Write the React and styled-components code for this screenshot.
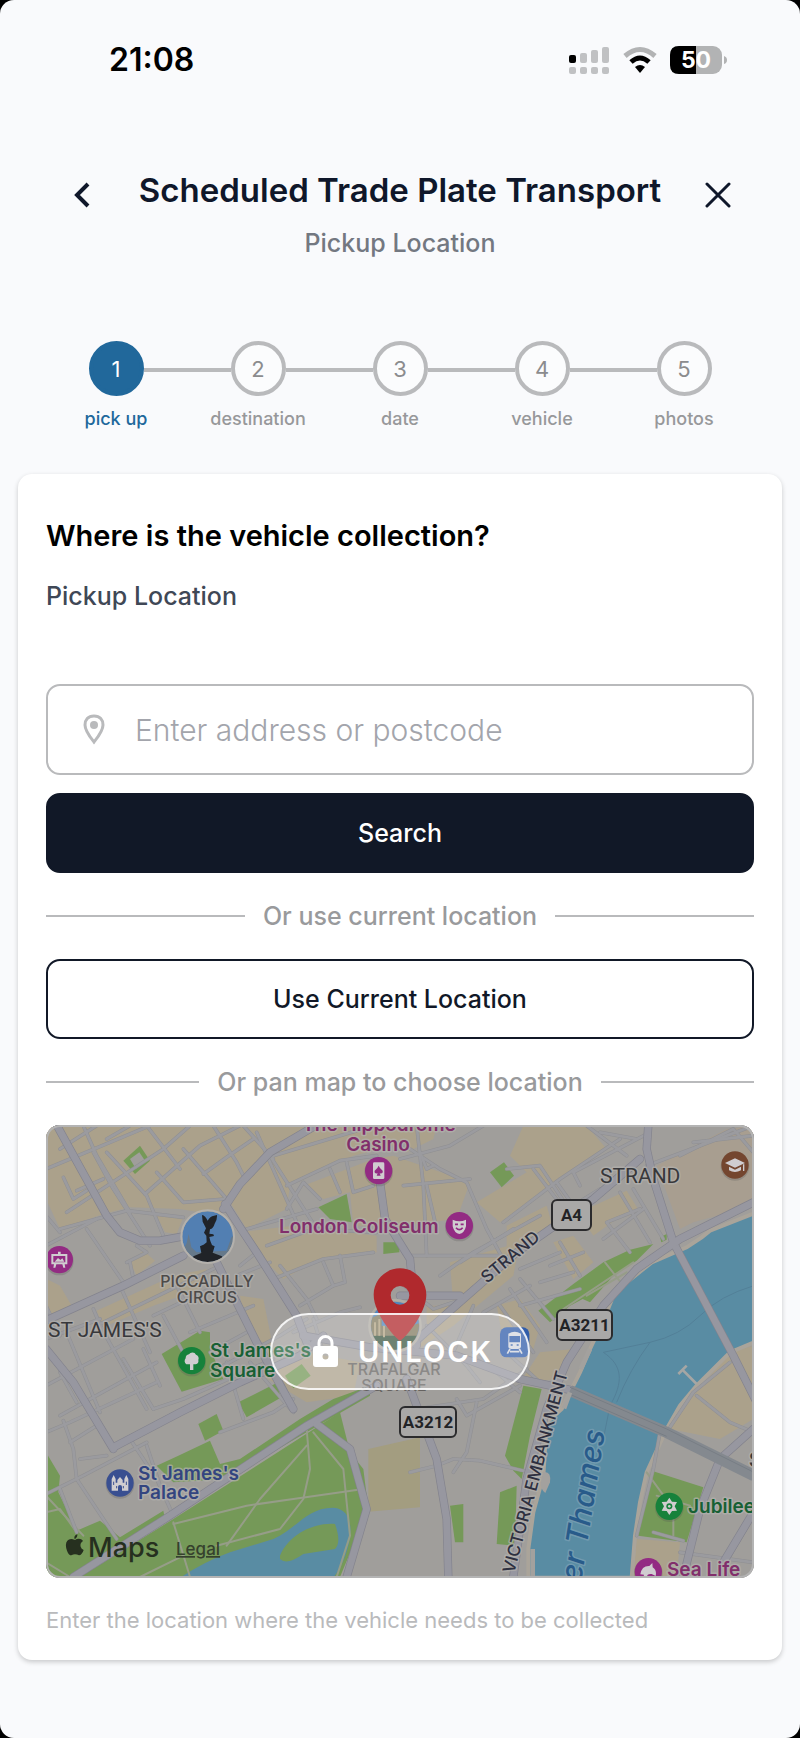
import React from "react";
import styled, { createGlobalStyle, css } from "styled-components";

const GlobalStyle = createGlobalStyle`
  * { box-sizing: border-box; }
  body { margin: 0; background: #000; }
  button, input { font: inherit; }
`;

const font = `Inter, "Liberation Sans", sans-serif`;

const Screen = styled.div`
  min-height: 100vh;
  background: #f9fafc;
  border-radius: 14px;
  font-family: ${font};
  color: #111827;
  padding-bottom: 76px;
`;

const StatusBar = styled.header`
  display: flex;
  align-items: center;
  justify-content: space-between;
  padding: 40px 72px 0 109px;
  height: 80px;
`;

const Clock = styled.time`
  font-size: 32px;
  line-height: 40px;
  font-weight: 600;
  color: #000;
`;

const StatusIcons = styled.div`
  display: flex;
  align-items: center;
  gap: 13px;
`;

const TitleBar = styled.div`
  display: grid;
  grid-template-columns: 72px 1fr 72px;
  align-items: start;
  padding: 88px 46px 0;
`;

const Titles = styled.div`
  text-align: center;
  white-space: nowrap;
`;

const Title = styled.h1`
  margin: 0;
  font-size: 33px;
  line-height: 44px;
  font-weight: 600;
  color: #0f172a;
`;

const Subtitle = styled.p`
  margin: 15px 0 0;
  font-size: 25px;
  line-height: 32px;
  font-weight: 500;
  color: #737881;
`;

const IconButton = styled.button`
  display: flex;
  align-items: center;
  justify-content: center;
  width: 72px;
  height: 54px;
  padding: 0;
  border: 0;
  background: none;
  color: #0f172a;
`;

const Steps = styled.ol`
  display: flex;
  list-style: none;
  margin: 0;
  padding: 82px 45px 0;
`;

const Step = styled.li`
  flex: 1;
  display: flex;
  flex-direction: column;
  align-items: center;
`;

const StepTrack = styled.div`
  display: flex;
  align-items: center;
  width: 100%;
`;

const StepLine = styled.span`
  flex: 1;
  height: 4px;
  margin-top: 3px;
  background: ${(p) => (p.$hidden ? "transparent" : "#b9babc")};
`;

const StepDot = styled.span`
  display: flex;
  align-items: center;
  justify-content: center;
  width: 55px;
  height: 55px;
  border-radius: 50%;
  font-size: 22px;
  font-weight: 400;
  border: 4px solid ${(p) => (p.$active ? "#21689b" : "#b9babc")};
  background: ${(p) => (p.$active ? "#21689b" : "#fbfcfd")};
  color: ${(p) => (p.$active ? "#fff" : "#8b8c8e")};
`;

const StepName = styled.span`
  margin-top: 11px;
  font-size: 18px;
  line-height: 24px;
  color: ${(p) => (p.$active ? "#21689b" : "#97989a")};
  font-weight: 500;
`;

const Card = styled.main`
  margin: 43px 18px 0;
  padding: 44px 28px 24px;
  background: #fff;
  border-radius: 14px;
  box-shadow: 0 2px 5px rgba(0, 0, 0, 0.2);
`;

const Question = styled.h2`
  margin: 0;
  font-size: 29px;
  line-height: 36px;
  font-weight: 600;
  color: #000;
`;

const FieldLabel = styled.label`
  display: block;
  margin-top: 26px;
  font-size: 25px;
  line-height: 32px;
  font-weight: 500;
  color: #3f4856;
`;

const AddressField = styled.div`
  display: flex;
  align-items: center;
  gap: 30px;
  margin-top: 72px;
  height: 91px;
  padding: 0 34px 0 35px;
  border: 2px solid #b9babc;
  border-radius: 14px;
`;

const AddressInput = styled.input`
  flex: 1;
  min-width: 0;
  border: 0;
  padding: 0;
  outline: 0;
  background: none;
  font-size: 30px;
  font-weight: 300;
  color: #111827;
  &::placeholder { color: #a3a5ac; opacity: 1; }
`;

const ActionButton = styled.button`
  display: block;
  width: 100%;
  height: 80px;
  border-radius: 14px;
  font-size: 25px;
  font-weight: 500;
  border: 2px solid #111827;
  ${(p) =>
    p.$primary
      ? css`margin-top: 18px; background: #111827; color: #fff;`
      : css`background: #fff; color: #111827;`}
`;

const Divider = styled.div`
  display: flex;
  align-items: center;
  gap: 18px;
  height: 86px;
  font-size: 25px;
  font-weight: 500;
  color: #999a9c;
  &::before, &::after {
    content: "";
    flex: 1;
    height: 2px;
    background: #b9babc;
  }
`;

const MapFrame = styled.section`
  position: relative;
  display: grid;
  place-items: center;
  aspect-ratio: 708 / 453;
  overflow: hidden;
  border-radius: 14px;
  background: #a09e9b;
  & > svg { grid-area: 1 / 1; width: 100%; height: 100%; display: block; }
  &::after {
    content: "";
    position: absolute;
    inset: 0;
    border: 2px solid #b4b4b4;
    border-radius: 14px;
    pointer-events: none;
  }
`;

const UnlockButton = styled.button`
  grid-area: 1 / 1;
  z-index: 1;
  display: flex;
  align-items: center;
  justify-content: center;
  gap: 20px;
  width: 260px;
  height: 77px;
  padding: 0 0 0 6px;
  border: 2px solid rgba(255, 255, 255, 0.85);
  border-radius: 39px;
  background: rgba(255, 255, 255, 0.25);
  color: #fff;
  font-size: 29px;
  font-weight: 600;
  letter-spacing: 2px;
`;

const Help = styled.p`
  margin: 26px 0 0;
  font-size: 22px;
  line-height: 32px;
  color: #b9babc;
`;

const MapText = styled.text`
  font-family: ${(p) => (p.$road ? `Roboto, "Liberation Sans", sans-serif` : font)};
  font-size: ${(p) => p.$size || 19}px;
  font-weight: ${(p) => p.$weight || 600};
  font-style: ${(p) => (p.$italic ? "italic" : "normal")};
  fill: ${(p) => p.$color || "#38383b"};
  stroke: ${(p) => p.$halo || "rgba(180,178,174,0.7)"};
  stroke-width: ${(p) => (p.$halo === "none" ? 0 : 3)}px;
  stroke-linejoin: round;
  paint-order: stroke;
`;

const steps = ["pick up", "destination", "date", "vehicle", "photos"];

/* Map geometry is drawn in units of one third of a pixel. */
const blocks = [
  "18,18 1180,18 1100,70 940,110 750,200 740,270 620,330 570,250 540,290 420,270 270,265 190,285 60,330 18,240",
  "350,290 430,295 410,345 375,340",
  "170,575 400,470 500,450 480,510 340,560 190,625",
  "20,480 60,500 95,560 60,600 20,610",
  "600,340 760,320 1010,350 1010,400 840,420 730,480 650,400",
  "600,530 670,540 700,690 620,640",
  "270,430 310,395 345,425 290,470",
  "790,200 1000,120 1060,110 1290,190 1250,300 1080,320 940,320 930,220 850,240",
  "1090,20 1190,20 1180,60 1100,100",
  "1450,20 1640,20 1700,90 1560,180 1380,310 1310,250 1460,160 1410,110",
  "1400,320 1520,260 1540,330 1470,370 1400,400",
  "1640,270 1760,215 1800,280 1730,300 1660,350 1640,320",
  "1540,370 1600,350 1660,430 1600,480",
  "1230,430 1440,370 1420,470 1240,620 1120,700 1240,560",
  "1370,560 1440,540 1500,620 1480,690 1400,720",
  "1160,560 1240,560 1160,640",
  "650,760 800,700 960,730 940,830 800,850",
  "1500,700 1600,690 1560,780 1440,790",
  "2070,700 2140,680 2140,900 2040,960 1890,930 1960,830",
  "1790,1260 1920,1270 1910,1374 1780,1374",
];
const pale = ["1850,140 2060,30 2140,20 2140,260 1960,310 1920,330"];
const greens = [
  "250,125 300,80 330,125 285,165",
  "835,265 920,225 935,310 870,300",
  "1030,370 1078,370 1078,400 1030,405",
  "1350,160 1392,130 1422,170 1385,205",
  "1495,575 1600,495 1690,430 1770,392 1840,375 1790,425 1720,470 1650,550 1628,540 1590,560 1530,610",
  "1860,355 1880,345 1880,362 1864,370",
  "365,705 480,635 510,640 510,690 550,780 425,818",
  "595,850 710,792 722,836 620,895",
  "475,915 530,885 550,935 495,965",
  "735,770 785,735 812,770 760,808",
  "415,1010 510,965 540,1035 600,1020 780,900 880,840 990,800 990,830 800,940 560,1080 400,1090 350,1040",
  "120,1374 400,1200 830,925 900,880 930,1000 970,1050 985,1170 900,1374",
  "18,1000 60,1070 55,1120 110,1235 180,1205 240,1255 370,1175 375,1200 130,1350 90,1374 18,1374",
  "1450,800 1505,810 1470,950 1445,1080 1420,1055 1395,1010",
  "1380,1120 1430,1100 1425,1280 1370,1275",
  "1230,1160 1270,1155 1270,1270 1245,1270",
  "1835,1055 1990,1105 1940,1270 1795,1250",
];
const minorRoads = [
  "60,90 170,20", "18,150 330,20", "160,100 220,210 330,380", "80,280 370,90 450,20", "110,215 190,180",
  "70,175 100,240 140,215", "130,20 170,110 270,280", "200,60 270,20", "200,100 320,230 370,350",
  "315,225 480,80 600,20", "350,160 430,250 555,240", "320,20 420,150", "430,90 560,240", "520,20 590,130 610,170",
  "490,165 560,115 640,60", "610,20 700,120", "650,40 770,310", "690,110 830,330", "700,110 1000,20",
  "740,200 900,125 1010,110", "840,240 790,190 740,270", "870,150 900,220", "920,130 940,220 1000,200",
  "620,330 830,270", "680,380 820,330 1010,340", "700,480 850,420 1000,400", "720,440 800,540 830,600",
  "850,430 880,500 915,490 900,410", "780,560 880,500", "600,440 650,400", "590,470 690,430", "60,330 260,275 430,295",
  "140,330 250,490", "260,430 320,400 290,380", "280,480 270,430", "18,290 60,340", "18,380 170,300",
  "160,570 190,640", "240,500 330,700", "370,590 440,720", "170,620 540,440", "340,590 530,500", "400,480 480,640",
  "18,660 180,600", "18,560 60,650", "80,640 180,880", "180,620 320,870", "18,800 280,660", "60,890 350,730",
  "60,760 110,850", "18,940 90,910 350,790", "250,720 340,870", "310,690 360,800", "70,905 100,990 110,1080 230,1260",
  "90,970 170,920", "120,1020 200,1010", "18,1125 130,1070 320,970", "60,1110 110,1240", "270,960 350,1080 400,1190",
  "320,980 370,1130", "340,870 430,840 700,720", "560,730 610,900", "630,730 760,880", "690,720 740,820",
  "540,940 700,880 760,840", "450,640 640,560", "510,700 620,640", "550,740 720,650 800,600",
  "760,640 900,580 960,565", "820,600 850,700", "1080,70 1200,150 1280,190 1340,330 1400,440",
  "1140,100 1160,150 1180,140", "1080,120 1230,80 1330,20", "1090,200 1290,180", "1160,200 1190,330", "1130,20 1150,200 1160,410",
  "1100,410 1380,410", "1080,490 1180,570 1270,540", "1200,470 1300,400 1500,290", "1260,430 1420,330",
  "1400,150 1500,140 1580,260", "1480,150 1580,280", "1390,310 1560,180 1740,60", "1640,20 1760,110", "1680,40 1790,60",
  "1620,200 1600,160 1830,40", "1550,190 1600,260 1680,210", "1740,220 1830,370", "1780,210 1870,360",
  "1800,270 1700,310 1770,400", "1690,360 1810,270", "1560,370 1620,470", "1530,440 1630,400", "1440,450 1560,400",
  "1500,490 1600,460", "1440,480 1540,600", "1380,560 1480,700", "1410,510 1520,670", "1330,580 1470,500",
  "1300,560 1240,700", "1440,560 1620,510", "1820,140 2140,20", "1920,110 2080,30 2140,100", "1960,70 2140,50",
  "1130,870 1330,840 1460,750", "1250,840 1280,890 1440,800", "1310,850 1280,1000 1240,1060",
  "1110,1060 1190,1040 1240,1020 1320,1025 1470,1060", "1160,620 1280,740 1320,790", "1300,700 1440,820", "1400,700 1500,790",
  "1890,925 1960,820 2070,730", "1970,830 2070,910 2140,940", "1860,940 1840,1050 1790,1250", "1840,1240 1930,1265",
  "1920,1300 2140,1330", "2070,1310 2140,1190",
];
const paths = [
  "400,1215 620,1160 760,1140 970,1110", "800,930 810,1050 790,1140 720,1230 530,1280",
  "800,980 660,1140 560,1280", "820,940 910,1050 930,1250 890,1374", "400,1210 450,1374", "18,1130 130,1250",
  "18,1330 90,1374", "18,1180 60,1170 110,1240", "1570,570 1780,430", "1640,530 1760,460", "1695,430 1750,500",
  "1820,1060 1900,1170 1900,1250", "1850,1130 1950,1160", "300,1374 430,1310",
];
const mainRoads = [
  "50,18 200,290 240,340 300,365 360,365 430,352", "18,605 250,500 430,410", "550,270 600,195 690,100 830,18",
  "555,255 610,340 650,400 770,590 800,670", "530,430 600,570 650,670 760,870", "18,690 100,790 220,990",
  "220,985 420,880 600,790 780,710 850,650", "790,650 990,685 1250,710 1440,780 1600,815",
  "100,1374 390,1190 800,920 1010,800", "1020,190 1035,300 1110,420 1120,530 1130,680",
  "1800,120 1660,240 1430,400 1270,540 1100,690", "1080,530 1260,530", "1100,780 1190,1020 1220,1200 1225,1374",
  "1825,18 1820,90 1840,180 1900,370 2080,710 2160,870", "2140,250 1920,360 1790,450 1690,560 1580,730 1520,870 1460,1080 1420,1374",
  "830,915 930,990 980,1170 920,1374", "2140,930 2040,1020 1980,1170 1930,1374", "2140,1180 2050,1330",
];

function Poi({ x, y, color, children }) {
  return (
    <g transform={`translate(${x} ${y})`}>
      <circle cy="4" r="43" fill="#555" opacity=".25" />
      <circle r="41" fill={color} />
      <g fill="#d0cdd0" stroke="none">{children}</g>
    </g>
  );
}

function RoadSign({ x, y, width, children }) {
  return (
    <g>
      <rect x={x} y={y} width={width} height="30" rx="5" fill="#a9a8a7" stroke="#2b2b2d" strokeWidth="2" />
      <MapText x={x + width / 2} y={y + 21} textAnchor="middle" $road $size={17} $weight={700} $color="#222326" $halo="none">
        {children}
      </MapText>
    </g>
  );
}

function LondonMap() {
  const magenta = "#812f6b";
  const line = (pts) => "M" + pts.split(" ").join("L");
  return (
    <svg viewBox="0 0 708 453" preserveAspectRatio="xMidYMid slice" role="img" aria-label="Map of central London">
      <defs>
        <clipPath id="eros"><circle cx="503" cy="353" r="76" /></clipPath>
        <clipPath id="gallery"><circle cx="1065" cy="620" r="72" /></clipPath>
      </defs>
      <rect width="708" height="453" fill="#a09e9b" />
      <g transform="translate(-6 -6) scale(0.333333)">
        {blocks.map((p) => <polygon key={p} points={p} fill="#aba18b" />)}
        {pale.map((p) => <polygon key={p} points={p} fill="#a89e90" />)}
        <polygon points="985,990 1140,955 1140,1165 985,1178" fill="#a39d80" />
        {greens.map((p) => <polygon key={p} points={p} fill="#759958" />)}
        <polygon points="270,120 298,100 315,125 288,150" fill="#a09e9b" />
        <path
          d="M2142 283L2010 335L1985 355L1940 385L1835 430L1760 490L1720 530L1690 605L1650 690L1620 760L1590 820L1565 870L1520 910L1510 1070L1480 1180L1465 1290V1376H1775L1785 1250L1800 1150L1820 1060L1880 930L1920 860L1970 800L2070 700L2142 670Z"
          fill="#598ca3" stroke="#aaa49a" strokeWidth="12"
        />
        <path d="M420 1376Q500 1325 570 1300L700 1260C770 1230 800 1165 880 1166C930 1170 940 1220 925 1280C915 1320 900 1350 880 1376Z" fill="#598ca3" />
        <path d="M720 1310C750 1240 830 1210 885 1215Q905 1270 885 1290L790 1305Q740 1340 720 1320Z" fill="#759958" />
        <g fill="none" stroke="#527f98" strokeWidth="3">
          <path d="M2142 500Q2040 530 1980 590T1830 670L1690 700C1750 740 1750 790 1710 860L1690 960" />
          <path d="M1830 670Q1770 750 1730 850" />
        </g>
        <g fill="none" strokeLinejoin="round" strokeLinecap="round">
          {paths.map((p) => <path key={p} d={line(p)} stroke="#969d88" strokeWidth="6" />)}
          {minorRoads.map((p) => <path key={p} d={line(p)} stroke="#8f8f92" strokeWidth="11" />)}
          {minorRoads.map((p) => <path key={p} d={line(p)} stroke="#9b9b9f" strokeWidth="8" />)}
          {mainRoads.map((p) => <path key={p} d={line(p)} stroke="#83838d" strokeWidth="25" />)}
          {mainRoads.map((p) => <path key={p} d={line(p)} stroke="#9797a0" strokeWidth="21" />)}
        </g>
        <path d="M1590 815L1880 940L2142 1070" stroke="#84898f" strokeWidth="34" fill="none" />
        <path d="M1590 805L1880 930L2142 1060M1590 826L1880 952" stroke="#777d85" strokeWidth="3" fill="none" />
        <path d="M1970 795L1930 755M1915 765L1940 740" stroke="#a5a6a4" strokeWidth="8" fill="none" />
        <path d="M1508 1060Q1535 1055 1530 1090L1516 1122Q1500 1110 1503 1090Z" fill="#a3a19e" />
        <path d="M1650 690L1622 750M1590 820L1572 868M1478 1290V1376" stroke="#a3a19e" strokeWidth="14" />

        <g clipPath="url(#eros)">
          <rect x="420" y="270" width="166" height="166" fill="#527fb2" />
          <path d="M425 400L440 372L446 345L454 385L470 400L560 395L574 355L588 345V440H425Z" fill="#66798a" />
          <path d="M486 288Q496 290 503 305Q510 292 522 290L531 288Q532 303 524 314Q520 328 510 331L508 344L520 346L522 351L508 354L511 366L516 378H490L500 370L499 350L492 341L498 328L488 308ZM480 382L502 372L524 382L518 402H484ZM452 440L460 412L484 402H520L546 412L556 440Z" fill="#202328" />
        </g>
        <circle cx="503" cy="353" r="79" fill="none" stroke="#b4b1ac" strokeWidth="6" />
        <g clipPath="url(#gallery)">
          <rect x="985" y="540" width="160" height="160" fill="#4f86bd" />
          <path d="M985 600L1010 590L1025 580V620L1080 630L1145 610V700H985Z" fill="#827b60" />
          <path d="M985 650H1145V700H985Z" fill="#3d5943" />
          <path d="M1005 610V650M1018 600V650M1032 620V655" stroke="#b1a383" strokeWidth="6" />
        </g>
        <circle cx="1065" cy="620" r="77" fill="none" stroke="#b0ada5" strokeWidth="7" />

        <Poi x={1016} y={155} color="#932b83">
          <rect x="-17" y="-25" width="34" height="50" rx="4" />
          <path d="M0-15Q3-7 12 0Q14 10 3 8L6 15H-6L-3 8Q-14 10-12 0Q-3-7 0-15Z" fill="#932b83" />
        </Poi>
        <Poi x={1258} y={320} color="#932b83">
          <path d="M-20-18Q0-8 20-18V2Q15 23 0 25Q-15 23-20 2Z" />
          <path d="M-13-4H-4M4-4H13M-10 6Q0 18 10 6" stroke="#932b83" strokeWidth="5" fill="none" />
        </Poi>
        <Poi x={58} y={422} color="#932b83">
          <path d="M-24-17H24V14H-24ZM-4-24H4V-17H-4ZM-16 14H-9L-12 24H-18ZM9 14H16L18 24H12Z" />
          <path d="M-18-11H18V8H-18Z" fill="#932b83" />
          <path d="M-14 6L-4-5L3 1L9-4L15 6Z" />
        </Poi>
        <Poi x={455} y={725} color="#16823b">
          <path d="M-5 28V11H-16A12 12 0 0 1-18-7A12 12 0 0 1-8-19A12 12 0 0 1 13-18A12 12 0 0 1 20-2A11 11 0 0 1 12 11H5V28Z" />
        </Poi>
        <Poi x={240} y={1092} color="#394f91">
          <path d="M-25 23V-12L-19-24L-13-12V-1H-8V-9L0-18L8-9V-1H13V-12L19-24L25-12V23H6V12A6 6 0 0 0-6 12V23Z" />
          <path d="M-19-4V6M19-4V6M-10 9V16M10 9V16" stroke="#394f91" strokeWidth="3" />
        </Poi>
        <Poi x={2085} y={138} color="#74462f">
          <path d="M-30-6L0-20L30-6L0 8ZM-18 5L0 14L18 5V16Q0 26-18 16ZM24-2H28V18H24Z" />
        </Poi>
        <Poi x={1888} y={1162} color="#16823b">
          <path d="M0-26L8-14L23-13L16 0L23 13L8 14L0 26L-8 14L-23 13L-16 0L-23-13L-8-14Z" />
          <circle r="9" fill="#16823b" /><circle r="4" />
        </Poi>
        <Poi x={1825} y={1358} color="#932b83">
          <path d="M-24 8Q-20-18 3-17L12-26L13-13Q26-5 22 13L10 7Q-5 5-4 17L-16 22L-13 9Z" />
        </Poi>
        <rect x="1380" y="625" width="88" height="90" rx="20" fill="#315daa" />
        <path d="M1405 644Q1424 632 1443 644V684Q1441 690 1434 690H1414Q1407 690 1405 684Z" fill="#d4d7df" />
        <path d="M1410 653H1438V668H1410ZM1412 678H1418M1430 678H1436" fill="#315daa" stroke="#315daa" strokeWidth="4" />
        <path d="M1410 690L1402 704M1438 690L1446 704M1410 698H1438" stroke="#d4d7df" strokeWidth="5" />
        <path
          fillRule="evenodd" fill="#b0292d"
          d="M1080 448C1036 448 1001 484 1001 527C1001 557 1018 590 1040 622Q1062 653 1080 666Q1098 653 1120 622C1142 590 1159 557 1159 527C1159 484 1124 448 1080 448ZM1080 501A28 28 0 1 1 1080 557A28 28 0 1 1 1080 501Z"
        />
        <g transform="translate(78 1246)" fill="#26301f">
          <path d="M34 0Q35 9 26 15Q22 4 34 0ZM27 17Q35 11 43 14Q49 16 51 20Q41 27 44 37Q46 44 53 47Q48 62 39 63Q33 60 27 60Q22 60 16 63Q8 63 3 49Q-4 28 4 19Q12 10 27 17Z" />
        </g>
      </g>

      <MapText x="333" y="6" textAnchor="middle" $color={magenta}>The Hippodrome</MapText>
      <MapText x="332" y="26" textAnchor="middle" $color={magenta}>Casino</MapText>
      <MapText x="233" y="108" $color={magenta}>London Coliseum</MapText>
      <MapText x="161" y="162" textAnchor="middle" $size={16} $weight={500} $color="#4c4a49">PICCADILLY</MapText>
      <MapText x="161" y="178" textAnchor="middle" $size={16} $weight={500} $color="#4c4a49">CIRCUS</MapText>
      <MapText x="2" y="212" $road $size={21} $weight={400}>ST JAMES'S</MapText>
      <MapText x="554" y="58" $road $size={21} $weight={400}>STRAND</MapText>
      <MapText x="164" y="232" $color="#176034">St James's</MapText>
      <MapText x="164" y="252" $color="#176034">Square</MapText>
      <MapText x="92" y="355" $color="#334580">St James's</MapText>
      <MapText x="92" y="374" $color="#334580">Palace</MapText>
      <MapText x="348" y="250" textAnchor="middle" $size={16} $weight={500} $color="#656260" $halo="none">TRAFALGAR</MapText>
      <MapText x="348" y="266" textAnchor="middle" $size={16} $weight={500} $color="#656260" $halo="none">SQUARE</MapText>
      <MapText x="642" y="388" $color="#176034">Jubilee</MapText>
      <MapText x="621" y="451" $color={magenta}>Sea Life</MapText>
      <MapText x="703" y="342" $road $size={21} $weight={500}>S</MapText>
      <MapText transform="translate(441 159) rotate(-40)" $size={17} $weight={500} $color="#2e3040">STRAND</MapText>
      <MapText transform="translate(468 449) rotate(-75)" $size={17} $weight={500} $color="#2e3040">VICTORIA EMBANKMENT</MapText>
      <MapText transform="translate(559 306) rotate(-81)" textAnchor="end" $size={30} $weight={500} $italic $color="#285b8a" $halo="rgba(130,165,185,0.6)">
        River Thames
      </MapText>
      <RoadSign x={506} y={75} width={39}>A4</RoadSign>
      <RoadSign x={511} y={185} width={55}>A3211</RoadSign>
      <RoadSign x={354} y={282} width={56}>A3212</RoadSign>
      <MapText x="42" y="432" $size={27} $weight={500} $color="#26301f" $halo="none">Maps</MapText>
      <MapText x="130" y="430" $size={17} $weight={500} $color="#35412d" $halo="none" textDecoration="underline">Legal</MapText>
    </svg>
  );
}

export default function App() {
  return (
    <Screen>
      <GlobalStyle />
      <StatusBar>
        <Clock>21:08</Clock>
        <StatusIcons>
          <svg width="42" height="28" viewBox="0 0 42 28" fill="#c0c1c3" aria-label="Signal">
            <rect x="1" y="9" width="7" height="8" rx="2" fill="#000" />
            <rect x="12" y="7" width="7" height="10" rx="2" />
            <rect x="23" y="4" width="7" height="13" rx="2" />
            <rect x="34" y="1" width="7" height="16" rx="2" />
            {[1, 12, 23, 34].map((x) => <rect key={x} x={x} y="21" width="7" height="7" rx="2" />)}
          </svg>
          <svg width="34" height="28" viewBox="0 0 34 28" fill="none" strokeWidth="5" aria-label="Wi-Fi">
            <path d="M2 10Q17-3 32 10" stroke="#b2b3b4" />
            <path d="M8 16Q17 8 26 16" stroke="#000" />
            <path d="M12 21Q17 17 22 21L17 27Z" fill="#000" />
          </svg>
          <svg width="58" height="28" viewBox="0 0 58 28" aria-label="Battery 50%">
            <rect width="52" height="28" rx="9" fill="#b2b3b4" />
            <path d="M9 0H26V28H9Q0 28 0 19V9Q0 0 9 0Z" fill="#000" />
            <path d="M54 10Q57 11 57 14Q57 17 54 18Z" fill="#b2b3b4" />
            <text x="26" y="22" textAnchor="middle" fontSize="23" fontWeight="700" fill="#fff">50</text>
          </svg>
        </StatusIcons>
      </StatusBar>

      <TitleBar>
        <IconButton aria-label="Back">
          <svg width="16" height="26" viewBox="0 0 16 26" fill="none" stroke="currentColor" strokeWidth="4">
            <path d="M14 2L3 13L14 24" />
          </svg>
        </IconButton>
        <Titles>
          <Title>Scheduled Trade Plate Transport</Title>
          <Subtitle>Pickup Location</Subtitle>
        </Titles>
        <IconButton aria-label="Close">
          <svg width="26" height="26" viewBox="0 0 26 26" fill="none" stroke="currentColor" strokeWidth="3" strokeLinecap="round">
            <path d="M2 2L24 24M24 2L2 24" />
          </svg>
        </IconButton>
      </TitleBar>

      <Steps>
        {steps.map((name, i) => (
          <Step key={name} aria-current={i === 0 ? "step" : undefined}>
            <StepTrack>
              <StepLine $hidden={i === 0} />
              <StepDot $active={i === 0}>{i + 1}</StepDot>
              <StepLine $hidden={i === steps.length - 1} />
            </StepTrack>
            <StepName $active={i === 0}>{name}</StepName>
          </Step>
        ))}
      </Steps>

      <Card>
        <Question>Where is the vehicle collection?</Question>
        <FieldLabel htmlFor="address">Pickup Location</FieldLabel>
        <AddressField>
          <svg width="22" height="31" viewBox="0 0 22 31" fill="none" stroke="#b9babc" strokeWidth="3">
            <path d="M11 2C5 2 2 6 2 11C2 17 7 23 11 28C15 23 20 17 20 11C20 6 17 2 11 2Z" />
            <circle cx="11" cy="11" r="4" fill="#b9babc" stroke="none" />
          </svg>
          <AddressInput id="address" placeholder="Enter address or postcode" />
        </AddressField>
        <ActionButton $primary>Search</ActionButton>
        <Divider>Or use current location</Divider>
        <ActionButton>Use Current Location</ActionButton>
        <Divider>Or pan map to choose location</Divider>
        <MapFrame>
          <LondonMap />
          <UnlockButton>
            <svg width="25" height="33" viewBox="0 0 25 33" aria-hidden="true">
              <path d="M6 13V8A6 6 0 0 1 19 8V13" fill="none" stroke="#fff" strokeWidth="3" />
              <path fillRule="evenodd" fill="#fff" d="M3 11H22Q25 11 25 14V29Q25 32 22 32H3Q0 32 0 29V14Q0 11 3 11ZM12.500 18.500A3 3 0 1 0 12.500 24.500A3 3 0 1 0 12.500 18.500Z" />
            </svg>
            UNLOCK
          </UnlockButton>
        </MapFrame>
        <Help>Enter the location where the vehicle needs to be collected</Help>
      </Card>
    </Screen>
  );
}
